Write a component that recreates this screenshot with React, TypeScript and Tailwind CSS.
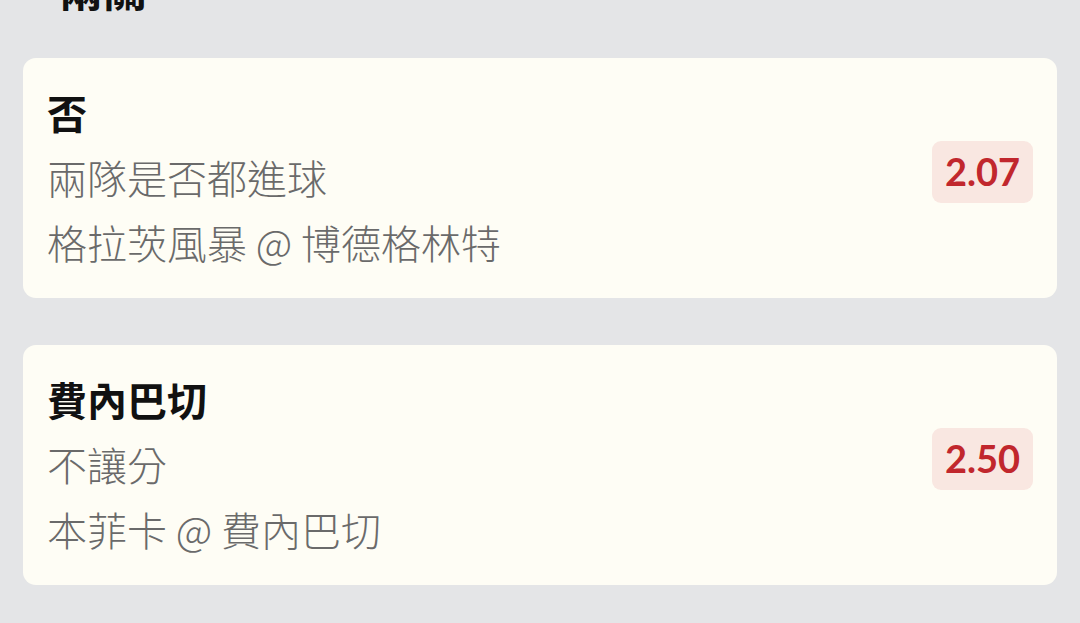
import React from "react";

type Pick = {
  selection: string;
  market: string;
  match: string;
  odds: string;
};

const picks: Pick[] = [
  { selection: "否", market: "兩隊是否都進球", match: "格拉茨風暴 @ 博德格林特", odds: "2.07" },
  { selection: "費內巴切", market: "不讓分", match: "本菲卡 @ 費內巴切", odds: "2.50" },
];

const cjk = { fontFamily: '"Noto Sans CJK TC", sans-serif' };

const PickCard = ({ pick }: { pick: Pick }) => (
  <div className="flex items-center justify-between rounded-[13px] bg-[#fefdf5] pl-[24px] pr-[24px] pt-[22px] pb-[23px]">
    <div className="flex flex-col text-[40px] leading-[65px]" style={cjk}>
      <span className="font-bold text-[#111111]">{pick.selection}</span>
      <span className="font-light text-[#6a6a6a]">{pick.market}</span>
      <span className="font-light text-[#6a6a6a]">{pick.match}</span>
    </div>
    <div
      className="mb-[12px] flex h-[62px] w-[101px] items-center justify-center rounded-[9px] bg-[#f9e7e1] text-[38px] font-bold text-[#c1272d]"
      style={{ fontFamily: "Lato, sans-serif" }}
    >
      {pick.odds}
    </div>
  </div>
);

export default function App() {
  return (
    <div className="h-[623px] w-[1080px] overflow-hidden bg-[#e4e5e7]">
      <div
        className="mt-[-34px] h-[44px] pl-[59px] text-[44px] font-bold leading-[44px] text-[#111111]"
        style={cjk}
      >
        兩關
      </div>
      <div className="mt-[48px] flex flex-col gap-[47px] px-[23px]">
        {picks.map((p) => (
          <PickCard key={p.odds} pick={p} />
        ))}
      </div>
    </div>
  );
}
